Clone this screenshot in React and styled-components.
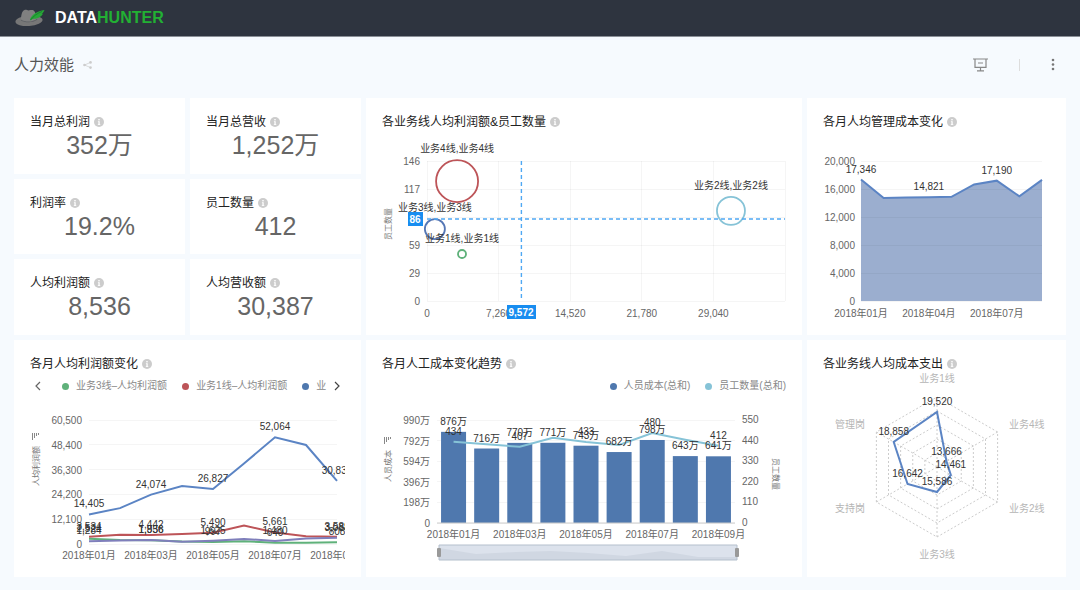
import React from "react";
import styled, { createGlobalStyle } from "styled-components";

const BLUE = "#4f78ae";
const LINE_BLUE = "#5b84c4";
const RED = "#bd5458";
const GREEN = "#5fb17a";
const TEAL = "#86c3d7";
const PURPLE = "#7f7fbb";

const kpis = [
  { name: "当月总利润", value: "352万" },
  { name: "当月总营收", value: "1,252万" },
  { name: "利润率", value: "19.2%" },
  { name: "员工数量", value: "412" },
  { name: "人均利润额", value: "8,536" },
  { name: "人均营收额", value: "30,387" },
];

const bubbles = [
  { name: "业务4线", x: 3050, y: 125, r: 21, color: RED },
  { name: "业务3线", x: 800, y: 75, r: 10, color: "#5577b5" },
  { name: "业务1线", x: 3550, y: 49, r: 4, color: GREEN },
  { name: "业务2线", x: 30820, y: 94, r: 14, color: TEAL },
];

const manageCost = [17346, 14700, 14790, 14821, 14880, 16650, 17190, 14950, 17300];

const profitSeries = [
  { color: GREEN, data: [2524, 1900, 1836, 1200, 997, 1300, 640, 550, 808] },
  { color: RED, data: [3534, 4500, 4442, 4900, 5490, 9000, 5661, 3800, 3581] },
  { color: PURPLE, data: [1284, 1750, 1956, 1050, 1625, 2450, 1480, 2650, 3088] },
  { color: LINE_BLUE, data: [14405, 17500, 24074, 28300, 26827, 39300, 52064, 48300, 30832] },
];

const laborCost = [876, 716, 770, 771, 743, 682, 798, 643, 641];
const staff = [434, 420, 407, 455, 433, 417, 480, 445, 412];

const radarAxes = [
  { name: "业务1线", value: "19,520", r: 55, tx: 0, ty: -88, anchor: "middle" },
  { name: "业务4线", value: "13,666", r: 11, tx: 72, ty: -42, anchor: "start" },
  { name: "业务2线", value: "14,461", r: 16, tx: 72, ty: 42, anchor: "start" },
  { name: "业务3线", value: "15,586", r: 25, tx: 0, ty: 88, anchor: "middle" },
  { name: "支持岗", value: "16,642", r: 34, tx: -72, ty: 42, anchor: "end" },
  { name: "管理岗", value: "18,858", r: 50, tx: -72, ty: -42, anchor: "end" },
];

const fmt = (n) => n.toLocaleString("en-US");
const toPath = (points) => points.map(([x, y]) => `${x},${y}`).join(" ");

function InfoIcon() {
  return (
    <Info viewBox="0 0 10 10" aria-hidden="true">
      <circle cx="5" cy="5" r="5" fill="#ccc" />
      <rect x="4.3" y="2" width="1.4" height="1.4" fill="#fff" />
      <path d="M3.9 4.2h1.8v3h.6v.8H3.8v-.8h.6V5h-.5z" fill="#fff" />
    </Info>
  );
}

function CardTitle({ children }) {
  return (
    <Title>
      {children}
      <InfoIcon />
    </Title>
  );
}

// small descending bars next to a sortable axis name
function SortIcon({ x, y }) {
  return (
    <path
      d={`M${x - 4} ${y - 3}h1v7h-1zM${x - 2} ${y - 3}h1v5h-1zM${x} ${y - 3}h1v3h-1zM${x + 2} ${y - 3}h1v2h-1z`}
      fill="#888"
    />
  );
}

function BubbleChart() {
  const left = 61;
  const right = 419;
  const top = 31;
  const bottom = 171;
  const sx = (v) => left + ((right - left) * v) / 36300;
  const sy = (v) => bottom - ((bottom - top) * v) / 146;
  const yTicks = ["0", "29", "59", "", "117", "146"];
  const xTicks = [0, 7260, 14520, 21780, 29040];
  return (
    <Chart viewBox="0 0 436 205">
      {yTicks.map((t, i) => {
        const y = bottom - i * 28;
        return (
          <g key={i}>
            <GridLine x1={left} x2={right} y1={y} y2={y} />
            <Tick x={left - 7} y={y + 4} textAnchor="end">{t}</Tick>
          </g>
        );
      })}
      {xTicks.map((t) => (
        <g key={t}>
          <GridLine x1={sx(t)} x2={sx(t)} y1={top} y2={bottom} />
          <Tick x={sx(t)} y={bottom + 16} textAnchor="middle">{fmt(t)}</Tick>
        </g>
      ))}
      <GridLine x1={right} x2={right} y1={top} y2={bottom} />
      <AxisName transform="translate(25 94) rotate(-90)">员工数量</AxisName>
      {bubbles.map((b) => (
        <circle
          key={b.name}
          cx={sx(b.x)}
          cy={sy(b.y)}
          r={b.r}
          fill="none"
          stroke={b.color}
          strokeWidth="1.8"
        />
      ))}
      <Pointer d={`M${sx(9572)} ${top}V${bottom}`} />
      <Pointer d={`M${left} 89H${right}`} />
      {bubbles.map((b) => (
        <Label key={b.name} x={sx(b.x)} y={sy(b.y) - b.r - 8}>
          {b.name},{b.name}
        </Label>
      ))}
      <rect x="42" y="82" width="15" height="14" fill="#188df0" />
      <PointerText x="49" y="93">86</PointerText>
      <rect x="141" y="175" width="29" height="14" fill="#188df0" />
      <PointerText x="155" y="186">9,572</PointerText>
    </Chart>
  );
}

function AreaChart() {
  const left = 54;
  const right = 235;
  const bottom = 171;
  const step = (right - left) / 8;
  const sy = (v) => bottom - (140 * v) / 20000;
  const points = manageCost.map((v, i) => [left + i * step, sy(v)]);
  return (
    <Chart viewBox="0 0 259 205">
      <polygon
        points={`${left},${bottom} ${toPath(points)} ${right},${bottom}`}
        fill="#9baecf"
      />
      {[0, 4000, 8000, 12000, 16000, 20000].map((t) => (
        <g key={t}>
          <GridLine x1={left} x2={right} y1={sy(t)} y2={sy(t)} />
          <Tick x={left - 6} y={sy(t) + 4} textAnchor="end">{fmt(t)}</Tick>
        </g>
      ))}
      <Line points={toPath(points)} stroke={LINE_BLUE} />
      {[0, 3, 6].map((i) => (
        <g key={i}>
          <Label x={points[i][0]} y={points[i][1] - 7}>{fmt(manageCost[i])}</Label>
          <Tick x={points[i][0]} y={bottom + 16} textAnchor="middle">
            2018年0{i + 1}月
          </Tick>
        </g>
      ))}
    </Chart>
  );
}

function ProfitChart() {
  const left = 75;
  const right = 323;
  const bottom = 150;
  const step = (right - left) / 8;
  const sy = (v) => bottom - (124 * v) / 60500;
  return (
    <Chart viewBox="0 0 331 183">
      {[0, 12100, 24200, 36300, 48400, 60500].map((t) => (
        <g key={t}>
          <GridLine x1={left} x2={right} y1={sy(t)} y2={sy(t)} />
          <Tick x={left - 7} y={sy(t) + 4} textAnchor="end">{fmt(t)}</Tick>
        </g>
      ))}
      <SortIcon x={22} y={42} />
      <AxisName transform="translate(25 72) rotate(-90)">人均利润额</AxisName>
      {profitSeries.map((s) => (
        <Line
          key={s.color}
          points={toPath(s.data.map((v, i) => [left + i * step, sy(v)]))}
          stroke={s.color}
        />
      ))}
      {[0, 2, 4, 6, 8].map((i) => (
        <g key={i}>
          {profitSeries.map((s) => (
            <Label key={s.color} x={left + i * step} y={sy(s.data[i]) - 7}>
              {fmt(s.data[i])}
            </Label>
          ))}
          <Tick x={left + i * step} y={bottom + 15} textAnchor="middle">
            2018年0{i + 1}月
          </Tick>
        </g>
      ))}
    </Chart>
  );
}

function CostChart() {
  const left = 71;
  const right = 369;
  const top = 26;
  const bottom = 129;
  const band = (right - left) / 9;
  const cx = (i) => left + band * (i + 0.5);
  const sy = (v, max) => bottom - ((bottom - top) * v) / max;
  return (
    <Chart viewBox="0 0 436 183">
      {[0, 1, 2, 3, 4, 5].map((i) => {
        const y = sy(i, 5);
        return (
          <g key={i}>
            <GridLine x1={left} x2={right} y1={y} y2={y} />
            <Tick x={left - 7} y={y + 4} textAnchor="end">
              {i === 0 ? "0" : `${i * 198}万`}
            </Tick>
            <Tick x={right + 7} y={y + 3}>{i * 110}</Tick>
          </g>
        );
      })}
      <SortIcon x={22} y={46} />
      <AxisName transform="translate(25 72) rotate(-90)">人员成本</AxisName>
      <AxisName transform="translate(407 80) rotate(90)">员工数量</AxisName>
      {laborCost.map((v, i) => (
        <rect
          key={i}
          x={cx(i) - 12.5}
          y={sy(v, 990)}
          width="25"
          height={bottom - sy(v, 990)}
          fill={BLUE}
        />
      ))}
      <line x1={left} x2={right} y1={bottom} y2={bottom} stroke="#ccc" />
      <Line points={toPath(staff.map((v, i) => [cx(i), sy(v, 550)]))} stroke={TEAL} />
      {laborCost.map((v, i) => (
        <Label key={i} x={cx(i)} y={sy(v, 990) - 7}>{v}万</Label>
      ))}
      {[0, 2, 4, 6, 8].map((i) => (
        <g key={i}>
          <Label x={cx(i)} y={sy(staff[i], 550) - 7}>{staff[i]}</Label>
          <Tick x={cx(i)} y={bottom + 15} textAnchor="middle">2018年0{i + 1}月</Tick>
        </g>
      ))}
      <rect x="73" y="151" width="298" height="15" fill="#dce2ec" />
      <path
        d="M73 154L110 160L150 158L185 157L222 159L260 162L296 157L332 163L371 163V166H73z"
        fill="#d0d7e2"
      />
      <path d="M73 151h298M73 166h298M73 151v15M371 151v15" stroke="#b4bfcc" />
      <rect x="71" y="154" width="4" height="9" rx="1" fill="#999" />
      <rect x="369" y="154" width="4" height="9" rx="1" fill="#999" />
    </Chart>
  );
}

function RadarChart() {
  const cx = 130;
  const cy = 95;
  const at = (i, r) => {
    const a = (Math.PI / 3) * i;
    return [cx + r * Math.sin(a), cy - r * Math.cos(a)];
  };
  return (
    <Chart viewBox="0 0 259 205">
      {[14, 28, 42, 56, 70].map((r) => (
        <Web key={r} points={toPath(radarAxes.map((_, i) => at(i, r)))} />
      ))}
      {radarAxes.map((a, i) => (
        <Web as="polyline" key={a.name} points={toPath([[cx, cy], at(i, 70)])} />
      ))}
      <polygon
        points={toPath(radarAxes.map((a, i) => at(i, a.r)))}
        fill="none"
        stroke={LINE_BLUE}
        strokeWidth="2"
      />
      {radarAxes.map((a, i) => (
        <g key={a.name}>
          <RadarName x={cx + a.tx} y={cy + a.ty + 3} textAnchor={a.anchor}>{a.name}</RadarName>
          <Label x={at(i, a.r)[0]} y={at(i, a.r)[1] - 7}>{a.value}</Label>
        </g>
      ))}
    </Chart>
  );
}

export default function App() {
  return (
    <>
      <GlobalStyle />
      <Header>
        <HatLogo viewBox="0 0 30 18" aria-hidden="true">
          <ellipse cx="14" cy="11.8" rx="13.6" ry="5.2" fill="#777" transform="rotate(-4 14 11.8)" />
          <path d="M6 11C6 6 7 2 9.500 1c2-.6 3 .8 5 .3 2.500-.6 4.500-.6 5.500 2l2 7c-4 3.500-12 3.700-16 .7z" fill="#808080" />
          <path d="M6 10.500c4 3 12 2.800 16-.7l.3 1C18 14 10 14 5.900 11.500z" fill="#5c5f63" />
          <path d="M15 10.500C17 5 22 2.500 29.500 1c-.8 2-1.500 3-2.700 3.800l1 .2c-2 3.500-6 4.800-10.300 5l-2 1.500z" fill="#27a737" />
          <path d="M15.500 11C18.500 7 22 4.500 27 2.500" stroke="#14702a" strokeWidth=".7" fill="none" />
        </HatLogo>
        <Brand>
          DATA<span>HUNTER</span>
        </Brand>
      </Header>
      <TitleBar>
        <h1>人力效能</h1>
        <IconButton aria-label="分享">
          <svg width="9" height="8" viewBox="0 0 9 8">
            <path d="M8 1.200L1.500 4L8 6.800" stroke="#d0d0d0" strokeWidth=".8" fill="none" />
            <circle cx="1.500" cy="4" r="1.300" fill="#ccc" />
            <circle cx="7.500" cy="1.400" r="1.300" fill="#ccc" />
            <circle cx="7.500" cy="6.600" r="1.300" fill="#ccc" />
          </svg>
        </IconButton>
        <Actions>
          <IconButton aria-label="演示">
            <svg width="15" height="14" viewBox="0 0 15 14" fill="none" stroke="#888" strokeWidth="1.200">
              <path d="M0 1h15M2 1v8.400h11V1M5 5h5M7.500 9.400v3M4 12.800h7" />
            </svg>
          </IconButton>
          <Divider />
          <IconButton aria-label="更多">
            <svg width="4" height="14" viewBox="0 0 4 14" fill="#777">
              <circle cx="2" cy="2" r="1.300" />
              <circle cx="2" cy="6.500" r="1.300" />
              <circle cx="2" cy="11" r="1.300" />
            </svg>
          </IconButton>
        </Actions>
      </TitleBar>
      <Board>
        <KpiGrid>
          {kpis.map((k) => (
            <Card key={k.name}>
              <CardTitle>{k.name}</CardTitle>
              <KpiValue>{k.value}</KpiValue>
            </Card>
          ))}
        </KpiGrid>
        <Card>
          <CardTitle>各业务线人均利润额&amp;员工数量</CardTitle>
          <BubbleChart />
        </Card>
        <Card>
          <CardTitle>各月人均管理成本变化</CardTitle>
          <AreaChart />
        </Card>
        <Card>
          <CardTitle>各月人均利润额变化</CardTitle>
          <LegendPager>
            <IconButton aria-label="上一页">
              <svg width="8" height="10" viewBox="0 0 8 10">
                <path d="M6 1L2 5l4 4" stroke="#666" strokeWidth="1.200" fill="none" />
              </svg>
            </IconButton>
            <PagedLegend>
              <LegendItem $color={GREEN}>业务3线–人均利润额</LegendItem>
              <LegendItem $color={RED}>业务1线–人均利润额</LegendItem>
              <LegendItem $color={BLUE}>业</LegendItem>
            </PagedLegend>
            <IconButton aria-label="下一页">
              <svg width="8" height="10" viewBox="0 0 8 10">
                <path d="M2 1l4 4l-4 4" stroke="#444" strokeWidth="1.200" fill="none" />
              </svg>
            </IconButton>
          </LegendPager>
          <ChartClip>
            <ProfitChart />
          </ChartClip>
        </Card>
        <Card>
          <CardTitle>各月人工成本变化趋势</CardTitle>
          <LegendRight>
            <LegendItem $color={BLUE}>人员成本(总和)</LegendItem>
            <LegendItem $color={TEAL}>员工数量(总和)</LegendItem>
          </LegendRight>
          <CostChart />
        </Card>
        <Card>
          <CardTitle>各业务线人均成本支出</CardTitle>
          <RadarChart />
        </Card>
      </Board>
    </>
  );
}

const GlobalStyle = createGlobalStyle`
  * {
    box-sizing: border-box;
  }
  body {
    margin: 0;
    background: #f6fafe;
    color: #333;
    font-family: "Liberation Sans", "Noto Sans CJK SC", sans-serif;
  }
`;

const Header = styled.header`
  display: flex;
  align-items: center;
  gap: 10px;
  height: 37px;
  padding: 0 15px;
  background: #2e343f;
  border-bottom: 1px solid #8b9097;
`;

const HatLogo = styled.svg`
  width: 30px;
  height: 18px;
`;

const Brand = styled.div`
  color: #fff;
  font-size: 16px;
  line-height: 20px;
  font-weight: bold;

  span {
    color: #22b033;
  }
`;

const TitleBar = styled.div`
  display: flex;
  align-items: center;
  gap: 9px;
  height: 56px;
  padding: 0 25px 0 14px;

  h1 {
    margin: 0;
    font-size: 15px;
    line-height: 20px;
    font-weight: normal;
    color: #555;
  }
`;

const IconButton = styled.button`
  display: flex;
  padding: 0;
  border: 0;
  background: none;
  cursor: pointer;
`;

const Actions = styled.div`
  display: flex;
  align-items: center;
  gap: 31px;
  margin-left: auto;
`;

const Divider = styled.span`
  width: 1px;
  height: 12px;
  background: #ddd;
`;

const Board = styled.main`
  display: grid;
  grid-template-columns: minmax(0, 347fr) minmax(0, 436fr) minmax(0, 259fr);
  gap: 5px;
  padding: 5px 14px 13px;
`;

const KpiGrid = styled.section`
  display: grid;
  grid-template-columns: 1fr 1fr;
  grid-auto-rows: 1fr;
  gap: 5px;
`;

const Card = styled.section`
  padding-top: 16px;
  background: #fff;
`;

const Title = styled.h2`
  display: flex;
  align-items: center;
  gap: 4px;
  height: 16px;
  margin: 0;
  padding: 0 16px;
  font-size: 12px;
  line-height: 16px;
  font-weight: normal;
  color: #222;
  white-space: nowrap;
`;

const Info = styled.svg`
  flex: none;
  width: 10px;
  height: 10px;
`;

const KpiValue = styled.div`
  font-size: 25px;
  line-height: 30px;
  text-align: center;
  color: #666;
`;

const LegendPager = styled.div`
  display: flex;
  align-items: center;
  gap: 7px;
  height: 16px;
  margin-top: 6px;
  padding: 0 20px;
`;

const Legend = styled.div`
  display: flex;
  flex: 1;
  gap: 15px;
`;

const PagedLegend = styled(Legend)`
  padding-left: 13px;
`;

const LegendRight = styled(Legend)`
  justify-content: flex-end;
  height: 16px;
  margin-top: 6px;
  padding: 0 16px;
`;

const LegendItem = styled.span`
  display: flex;
  align-items: center;
  gap: 7px;
  font-size: 10px;
  line-height: 16px;
  color: #888;
  white-space: nowrap;

  &::before {
    content: "";
    width: 7px;
    height: 7px;
    border-radius: 50%;
    background: ${(p) => p.$color};
  }
`;

const ChartClip = styled.div`
  padding-right: 16px;
`;

const Chart = styled.svg`
  display: block;
  width: 100%;
  height: auto;
`;

const GridLine = styled.line`
  stroke: #000;
  stroke-opacity: 0.04;
  shape-rendering: crispEdges;
`;

const Line = styled.polyline`
  fill: none;
  stroke-width: 2px;
`;

const Pointer = styled.path`
  fill: none;
  stroke: #4fa8f3;
  stroke-width: 1.4;
  stroke-dasharray: 4 3;
`;

const Web = styled.polygon`
  fill: none;
  stroke: #ccc;
  stroke-dasharray: 2 2;
`;

const Tick = styled.text`
  font-size: 10px;
  fill: #666;
`;

const Label = styled.text`
  font-size: 10px;
  fill: #333;
  text-anchor: middle;
`;

const AxisName = styled.text`
  font-size: 8px;
  fill: #777;
  text-anchor: middle;
`;

const RadarName = styled.text`
  font-size: 10px;
  fill: #b5b5b5;
`;

const PointerText = styled.text`
  font-size: 10px;
  font-weight: bold;
  fill: #fff;
  text-anchor: middle;
`;
